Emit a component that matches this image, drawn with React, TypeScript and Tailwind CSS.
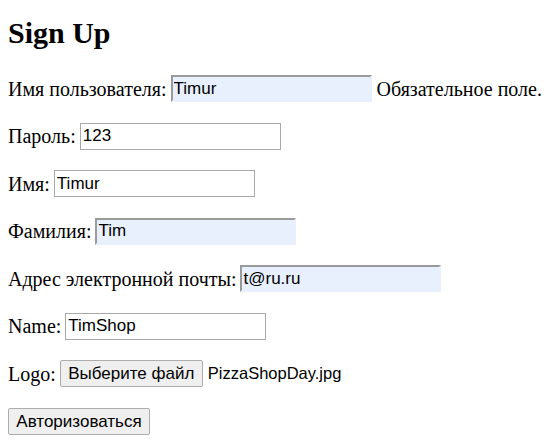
import React from 'react';

const serif = "font-['Liberation_Serif','Times_New_Roman',serif]";
const sans = "font-['Liberation_Sans',Arial,sans-serif]";

type Field = {
  label: string;
  value: string;
  autofill?: boolean;
  note?: string;
};

const fields: Field[] = [
  { label: 'Имя пользователя:', value: 'Timur', autofill: true, note: 'Обязательное поле.' },
  { label: 'Пароль:', value: '123' },
  { label: 'Имя:', value: 'Timur' },
  { label: 'Фамилия:', value: 'Tim', autofill: true },
  { label: 'Адрес электронной почты:', value: 't@ru.ru', autofill: true },
  { label: 'Name:', value: 'TimShop' },
];

const App = () => {
  return (
    <div className={`min-h-screen bg-white px-[8px] text-black ${serif}`}>
      <h1 className="pt-[16px] text-[30px] font-bold leading-[34px]">Sign Up</h1>

      <form className="mt-[25px] flex flex-col gap-[20.5px] text-[20px]" onSubmit={(e) => e.preventDefault()}>
        {fields.map((field) => (
          <div key={field.label} className="flex h-[27px] items-center whitespace-nowrap">
            <span>{field.label}</span>
            <input
              type="text"
              defaultValue={field.value}
              className={
                field.autofill
                  ? `ml-[4px] h-[27px] w-[201px] shrink-0 border-2 border-t-[#9a9a9a] border-l-[#9a9a9a] border-r-[#e8f0fe] border-b-[#e8f0fe] bg-[#e8f0fe] px-[1px] text-[17px] outline-none ${sans}`
                  : `ml-[4px] h-[27px] w-[201px] shrink-0 border border-[#a9a9a9] bg-white px-[2px] text-[17px] outline-none ${sans}`
              }
            />
            {field.note && <span className="ml-[5px]">{field.note}</span>}
          </div>
        ))}

        <div className="flex h-[27px] items-center">
          <span>Logo:</span>
          <button
            type="button"
            className={`ml-[4px] h-[27px] w-[143px] rounded-[2px] border border-[#adadad] bg-[#efefef] text-[17px] ${sans}`}
          >
            Выберите файл
          </button>
          <span className={`ml-[5px] text-[16.5px] ${sans}`}>PizzaShopDay.jpg</span>
        </div>

        <div className="flex h-[27px] items-center">
          <button
            type="submit"
            className={`h-[27px] w-[142px] rounded-[2px] border border-[#adadad] bg-[#efefef] text-[17px] ${sans}`}
          >
            Авторизоваться
          </button>
        </div>
      </form>
    </div>
  );
};

export default App;
